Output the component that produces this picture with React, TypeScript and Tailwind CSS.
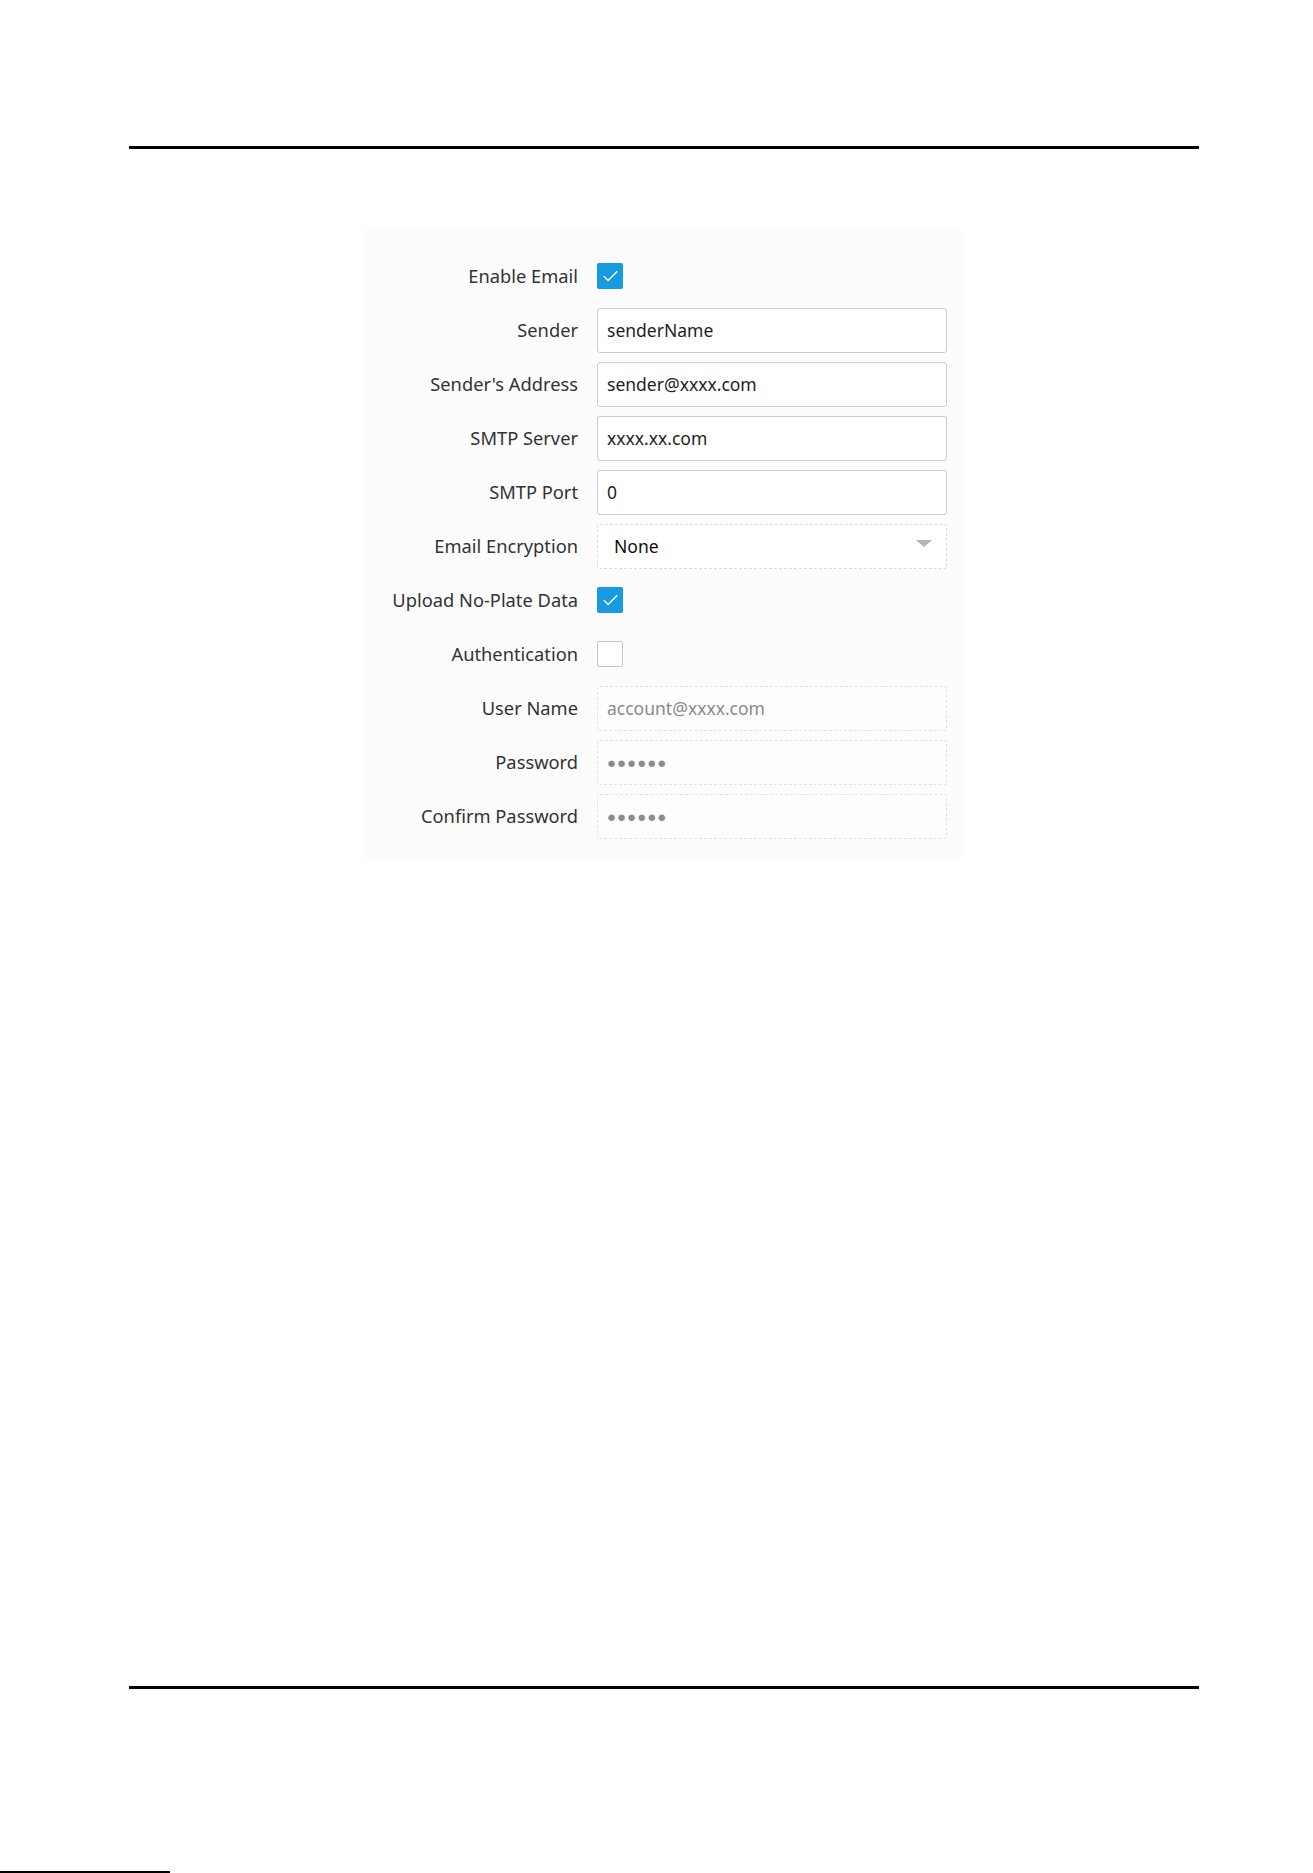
import { Check } from "lucide-react";

type Row =
	| { label: string; kind: "check"; checked: boolean }
	| { label: string; kind: "input"; value: string; disabled?: boolean; placeholder?: boolean; dots?: boolean }
	| { label: string; kind: "select"; value: string };

const rows: Row[] = [
	{ label: "Enable Email", kind: "check", checked: true },
	{ label: "Sender", kind: "input", value: "senderName" },
	{ label: "Sender's Address", kind: "input", value: "sender@xxxx.com" },
	{ label: "SMTP Server", kind: "input", value: "xxxx.xx.com" },
	{ label: "SMTP Port", kind: "input", value: "0" },
	{ label: "Email Encryption", kind: "select", value: "None" },
	{ label: "Upload No-Plate Data", kind: "check", checked: true },
	{ label: "Authentication", kind: "check", checked: false },
	{ label: "User Name", kind: "input", value: "account@xxxx.com", disabled: true, placeholder: true },
	{ label: "Password", kind: "input", value: "●●●●●●", disabled: true, dots: true },
	{ label: "Confirm Password", kind: "input", value: "●●●●●●", disabled: true, dots: true },
];

function Control({ row }: { row: Row }) {
	if (row.kind === "check") {
		return row.checked ? (
			<div className="w-[26px] h-[26px] rounded-[2px] bg-[#169be0] flex items-center justify-center">
				<Check className="w-[19px] h-[19px] text-white" strokeWidth={1.8} />
			</div>
		) : (
			<div className="w-[26px] h-[26px] rounded-[2px] border border-[#c6c6c6] bg-white" />
		);
	}

	if (row.kind === "select") {
		return (
			<div className="w-[350px] h-[45px] rounded-[3px] border border-dashed border-[#dcdcdc] bg-white flex items-center justify-between pl-[16px] pr-[14px]">
				<span className="text-[17.5px] text-[#0d0d0d]">{row.value}</span>
				{/* caret */}
				<span className="w-0 h-0 border-l-[8px] border-r-[8px] border-t-[7px] border-l-transparent border-r-transparent border-t-[#b3b3b3] -mt-[6px]" />
			</div>
		);
	}

	return (
		<div
			className={
				row.disabled
					? "w-[350px] h-[45px] rounded-[3px] border border-dashed border-[#e2e2e2] bg-[#fdfdfd] flex items-center pl-[9px]"
					: "w-[350px] h-[45px] rounded-[3px] border border-[#cdcdcd] bg-white flex items-center pl-[9px]"
			}
		>
			{row.dots ? (
				<span className="text-[15px] tracking-[1px] text-[#8c8c8c]">{row.value}</span>
			) : (
				<span className={row.placeholder ? "text-[17.5px] text-[#8a8a8a]" : "text-[17.5px] text-[#1e1e1e]"}>{row.value}</span>
			)}
		</div>
	);
}

export default function App() {
	return (
		<div className="w-[1313px] h-[1873px] bg-white flex flex-col font-['Noto_Sans',sans-serif]">
			{/* header rule */}
			<div className="mt-[146px] ml-[129px] w-[1070px] h-[3px] bg-black" />

			{/* form panel */}
			<div className="mt-[81px] ml-[362px] w-[602px] h-[628px] bg-[#fcfcfc] pt-[19px]">
				{rows.map((row) => (
					<div key={row.label} className="h-[54px] flex items-center">
						<div className="w-[216px] text-right text-[18.3px] text-[#333] whitespace-nowrap">{row.label}</div>
						<div className="ml-[19px]">
							<Control row={row} />
						</div>
					</div>
				))}
			</div>

			{/* footer rule */}
			<div className="mt-[828px] ml-[129px] w-[1070px] h-[3px] bg-black" />

			<div className="mt-auto flex items-end h-[2px]">
				<div className="w-[170px] h-[2px] bg-black" />
			</div>
		</div>
	);
}
